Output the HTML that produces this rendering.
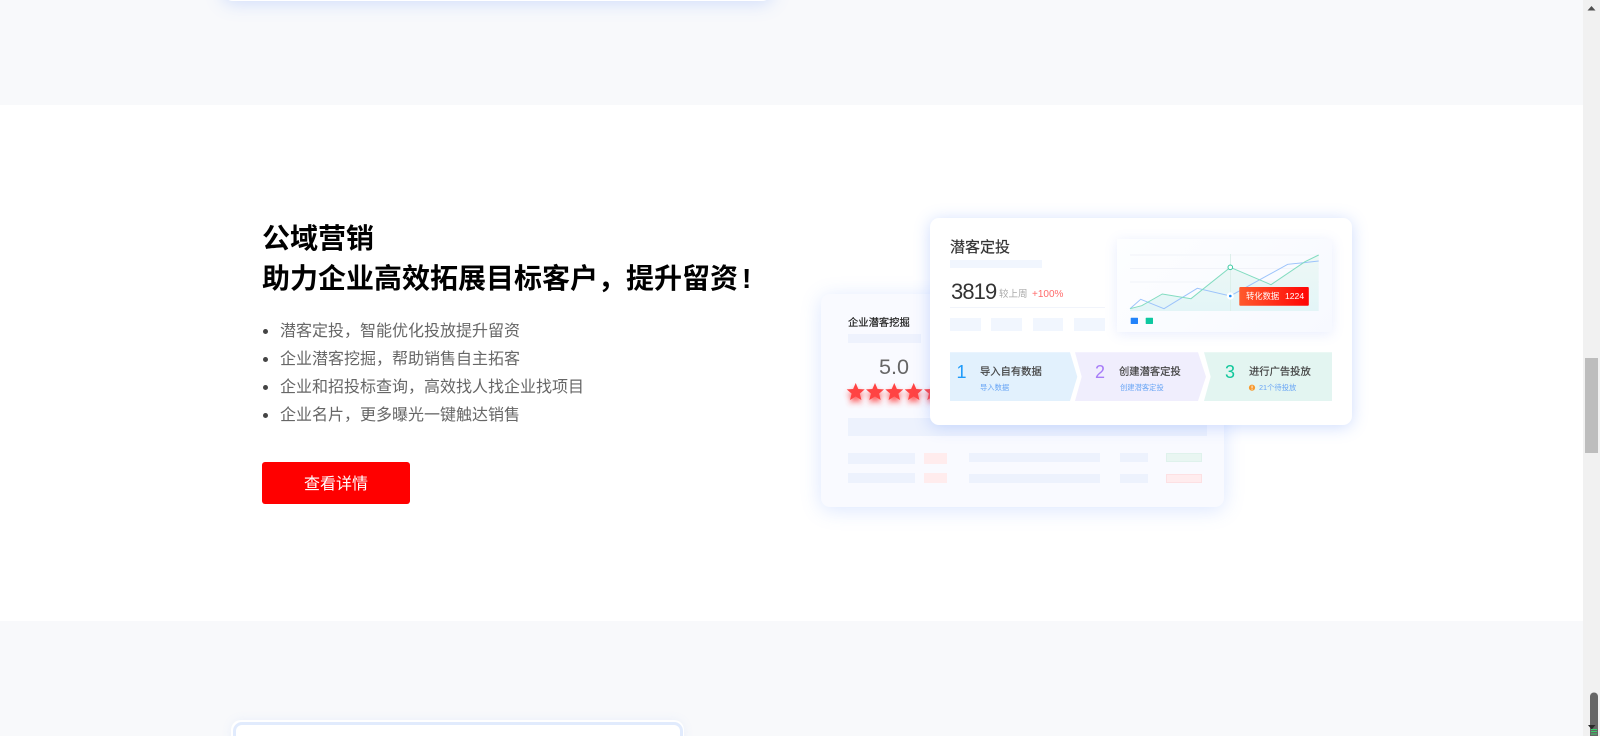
<!DOCTYPE html>
<html lang="zh-CN">
<head>
<meta charset="utf-8">
<title>公域营销</title>
<style>
html,body{margin:0;padding:0;width:1600px;height:736px;overflow:hidden;background:#f8f9fb;}
body{position:relative;font-family:"Liberation Sans","Noto Sans CJK SC",sans-serif;}
div{box-sizing:border-box;}
.a{position:absolute;}
.t{position:absolute;white-space:nowrap;}
.m{-webkit-text-stroke:.2px currentColor;}
#white{left:0;top:105px;width:1583px;height:516px;background:#fff;}
h2{position:absolute;left:262px;margin:0;font-size:28px;line-height:40px;font-weight:700;color:#000;white-space:nowrap;font-family:"Liberation Sans","Noto Sans CJK SC",sans-serif;}
.li{position:absolute;left:280px;font-size:16px;line-height:28px;color:#666;white-space:nowrap;}
.dot{position:absolute;left:263px;width:5px;height:5px;border-radius:50%;background:#444;}
#btn{left:262px;top:462px;width:148px;height:42px;background:#f00;border-radius:3px;color:#fff;font-size:16px;line-height:46px;text-align:center;}
#img{left:0;top:0;width:1583px;height:736px;filter:blur(.35px);}
#back{left:821px;top:294px;width:403px;height:213px;background:#f9faff;border-radius:9px;box-shadow:0 3px 20px rgba(90,140,255,.22);}
#front{left:930px;top:218px;width:422px;height:207px;background:#fff;border-radius:9px;box-shadow:0 2px 16px rgba(80,130,250,.28);}
#chart{left:1117px;top:239px;width:215px;height:93px;background:linear-gradient(135deg,#fdfeff,#f7f9ff);box-shadow:0 2px 12px rgba(90,130,250,.14);}
.b{position:absolute;}
</style>
</head>
<body>
<div class="a" style="left:223px;top:-30px;width:549px;height:31px;background:#fff;border-radius:10px;box-shadow:0 2px 18px rgba(90,140,255,.26);"></div>
<div class="a" id="white"></div>

<h2 style="top:219px;">公域营销</h2>
<h2 style="top:259px;">助力企业高效拓展目标客户，提升留资<span style="padding-left:4px;">!</span></h2>

<div class="dot" style="top:329px;"></div><div class="li" style="top:318px;">潜客定投，智能优化投放提升留资</div>
<div class="dot" style="top:357px;"></div><div class="li" style="top:346px;">企业潜客挖掘，帮助销售自主拓客</div>
<div class="dot" style="top:385px;"></div><div class="li" style="top:374px;">企业和招投标查询，高效找人找企业找项目</div>
<div class="dot" style="top:413px;"></div><div class="li" style="top:402px;">企业名片，更多曝光一键触达销售</div>

<div class="a" id="btn">查看详情</div>

<div class="a" id="img">
  <div class="a" id="back"></div>
  <div class="t m" style="left:848px;top:315.5px;font-size:10.3px;line-height:16px;color:#222;">企业潜客挖掘</div>
  <div class="b" style="left:848px;top:334px;width:73px;height:9px;background:#eef2fd;"></div>
  <div class="t" style="left:879px;top:353px;font-size:21.6px;line-height:28px;color:#666;">5.0</div>
  <svg class="a" style="left:840px;top:378px;overflow:visible;" width="110" height="34" viewBox="0 0 110 34">
    <defs>
      <filter id="gl" x="-60%" y="-60%" width="220%" height="220%"><feGaussianBlur stdDeviation="3"/></filter>
      <polygon id="st" points="0,-9 2.6,-3 9,-2.6 4.1,1.6 5.7,8 0,4.5 -5.7,8 -4.1,1.6 -9,-2.6 -2.6,-3"/>
    </defs>
    <g fill="#ff4a4a" filter="url(#gl)" opacity=".9">
      <use href="#st" x="15.7" y="18"/><use href="#st" x="35" y="18"/><use href="#st" x="54.3" y="18"/><use href="#st" x="73.7" y="18"/><use href="#st" x="93" y="18"/>
    </g>
    <g fill="#ff4343">
      <use href="#st" x="15.7" y="14"/><use href="#st" x="35" y="14"/><use href="#st" x="54.3" y="14"/><use href="#st" x="73.7" y="14"/><use href="#st" x="93" y="14"/>
    </g>
  </svg>
  <div class="b" style="left:848px;top:418px;width:359px;height:18px;background:#edf2fd;"></div>
  <div class="b" style="left:848px;top:453px;width:67px;height:11px;background:#edf2fd;"></div>
  <div class="b" style="left:924px;top:453px;width:23px;height:11px;background:#ffeced;"></div>
  <div class="b" style="left:969px;top:453px;width:131px;height:9px;background:#edf2fd;"></div>
  <div class="b" style="left:1120px;top:453px;width:28px;height:9px;background:#edf2fd;"></div>
  <div class="b" style="left:1166px;top:453px;width:36px;height:9px;background:#e9f6f2;border:1px solid #dff2ec;"></div>
  <div class="b" style="left:848px;top:473px;width:67px;height:10px;background:#edf2fd;"></div>
  <div class="b" style="left:924px;top:473px;width:23px;height:10px;background:#ffeced;"></div>
  <div class="b" style="left:969px;top:474px;width:131px;height:9px;background:#edf2fd;"></div>
  <div class="b" style="left:1120px;top:474px;width:28px;height:9px;background:#edf2fd;"></div>
  <div class="b" style="left:1166px;top:474px;width:36px;height:9px;background:#ffecee;border:1px solid #fde0e3;"></div>

  <div class="a" id="front"></div>
  <div class="t m" style="left:950px;top:237px;font-size:15px;line-height:22px;color:#333;">潜客定投</div>
  <div class="b" style="left:950px;top:260px;width:92px;height:8px;background:#f1f6fe;"></div>
  <div class="t" style="left:951px;top:278px;font-size:22px;line-height:28px;color:#333;letter-spacing:-.9px;">3819</div>
  <div class="t" style="left:999px;top:287px;font-size:9.5px;line-height:16px;color:#aaa;">较上周</div>
  <div class="t" style="left:1032px;top:286.5px;font-size:10px;line-height:16px;color:#ff6b6b;">+100%</div>
  <div class="b" style="left:950px;top:307px;width:155px;height:1px;background:#f1f4fb;"></div>
  <div class="b" style="left:950px;top:318px;width:31px;height:13px;background:#f1f6fe;"></div>
  <div class="b" style="left:991px;top:318px;width:31px;height:13px;background:#f1f6fe;"></div>
  <div class="b" style="left:1033px;top:318px;width:30px;height:13px;background:#f1f6fe;"></div>
  <div class="b" style="left:1074px;top:318px;width:31px;height:13px;background:#f1f6fe;"></div>

  <div class="a" id="chart"></div>
  <svg class="a" style="left:0;top:0;" width="1583" height="736" viewBox="0 0 1583 736">
    <defs>
      <linearGradient id="fg" x1="0" y1="0" x2="0" y2="1"><stop offset="0" stop-color="#eef8f6"/><stop offset="1" stop-color="#e3f5f7"/></linearGradient>
      <linearGradient id="rg" x1="0" y1="0" x2="1" y2="0"><stop offset="0" stop-color="#ff5a2c"/><stop offset="1" stop-color="#ff0505"/></linearGradient>
    </defs>
    <g stroke="#f1f3f9" stroke-width="1">
      <line x1="1130" y1="255" x2="1319" y2="255"/>
      <line x1="1130" y1="268.5" x2="1319" y2="268.5"/>
      <line x1="1130" y1="282" x2="1319" y2="282"/>
    </g>
    <polygon fill="url(#fg)" points="1130,308.7 1141.7,305.7 1162.3,294 1191,298.7 1230.3,267.3 1271,284.7 1305,261.7 1318.7,255 1318.7,311 1130,311"/>
    <line x1="1230.5" y1="254" x2="1230.5" y2="311" stroke="#dcefea" stroke-width="1"/>
    <polyline fill="none" stroke="#9cc3fb" stroke-width="1" points="1130,308.7 1140.7,299.3 1164,308.7 1197.3,288.3 1230.3,296 1287.7,264.3 1303.3,262.7 1318.7,261"/>
    <polyline fill="none" stroke="#82dcc0" stroke-width="1" points="1130,308.7 1141.7,305.7 1162.3,294 1191,298.7 1230.3,267.3 1271,284.7 1305,261.7 1318.7,255"/>
    <circle cx="1230.3" cy="267.3" r="2.3" fill="#fff" stroke="#3cc9a4" stroke-width="1"/>
    <circle cx="1230.3" cy="296" r="3.6" fill="#fff"/>
    <circle cx="1230.3" cy="296" r="1.3" fill="#1e8cfa"/>
    <rect x="1239.3" y="287" width="69.5" height="18.7" rx="1" fill="url(#rg)"/>
    <rect x="1130.7" y="317.7" width="7.3" height="6.3" rx=".6" fill="#2283fa"/>
    <rect x="1145.7" y="317.7" width="7.3" height="6.3" rx=".6" fill="#0ec8a0"/>
    <polygon fill="#e2f1fd" points="950,352.3 1070,352.3 1077.3,376.7 1070,401 950,401"/>
    <polygon fill="#f0eefd" points="1075,352.3 1198,352.3 1206,376.7 1198,401 1075,401 1081.7,376.7"/>
    <polygon fill="#e3f5f1" points="1204,352.3 1332,352.3 1332,401 1204,401 1210.7,376.7"/>
    <circle cx="1252" cy="387.7" r="3.1" fill="#f79a2e"/>
    <rect x="1251.6" y="385.6" width=".9" height="2.6" fill="#fff"/>
    <rect x="1251.6" y="388.8" width=".9" height=".9" fill="#fff"/>
  </svg>
  <div class="t" style="left:1246px;top:288px;font-size:8.3px;line-height:16px;color:#fff;">转化数据</div>
  <div class="t" style="left:1285px;top:288px;font-size:8.6px;line-height:16px;color:#fff;">1224</div>

  <div class="t" style="left:956.5px;top:361px;font-size:18px;line-height:22px;color:#1e9bfa;">1</div>
  <div class="t m" style="left:980px;top:365px;font-size:10.3px;line-height:16px;color:#444;">导入自有数据</div>
  <div class="t" style="left:980px;top:380px;font-size:7.3px;line-height:16px;color:#6aa6f5;">导入数据</div>

  <div class="t" style="left:1095px;top:361px;font-size:18px;line-height:22px;color:#a77cf8;">2</div>
  <div class="t m" style="left:1119px;top:365px;font-size:10.3px;line-height:16px;color:#444;">创建潜客定投</div>
  <div class="t" style="left:1120px;top:380px;font-size:7.3px;line-height:16px;color:#6aa6f5;">创建潜客定投</div>

  <div class="t" style="left:1225px;top:361px;font-size:18px;line-height:22px;color:#10c79b;">3</div>
  <div class="t m" style="left:1249px;top:365px;font-size:10.3px;line-height:16px;color:#444;">进行广告投放</div>
  <div class="t" style="left:1259px;top:380px;font-size:7.3px;line-height:16px;color:#6aa6f5;">21个待投放</div>
</div>

<div class="a" style="left:231px;top:720px;width:453px;height:40px;background:#fff;border-radius:10px;box-shadow:0 0 10px rgba(120,160,250,.10);"></div>
<div class="a" style="left:233px;top:722px;width:450px;height:40px;background:#fff;border:3px solid #e1ebfd;border-radius:9px;"></div>

<div class="a" style="left:1583px;top:0;width:17px;height:736px;background:#f1f1f1;"></div>
<svg class="a" style="left:1583px;top:0;" width="17" height="736" viewBox="0 0 17 736">
  <polygon points="8.5,6 12.5,10.5 4.5,10.5" fill="#505050"/>
  <rect x="2" y="358" width="13" height="95" fill="#bdbdbd"/>
  <path d="M7 736V696.5a4 4 0 0 1 8 0V736z" fill="#666"/>
  <polygon points="5,725 12.5,725 8.7,729.5" fill="#2b2b2b"/>
  <rect x="8" y="729" width="6" height="1" fill="#39cf6a"/>
  <rect x="8" y="731" width="6" height="1" fill="#39cf6a"/>
  <rect x="8" y="733.5" width="6" height="1" fill="#39cf6a"/>
</svg>
</body>
</html>
